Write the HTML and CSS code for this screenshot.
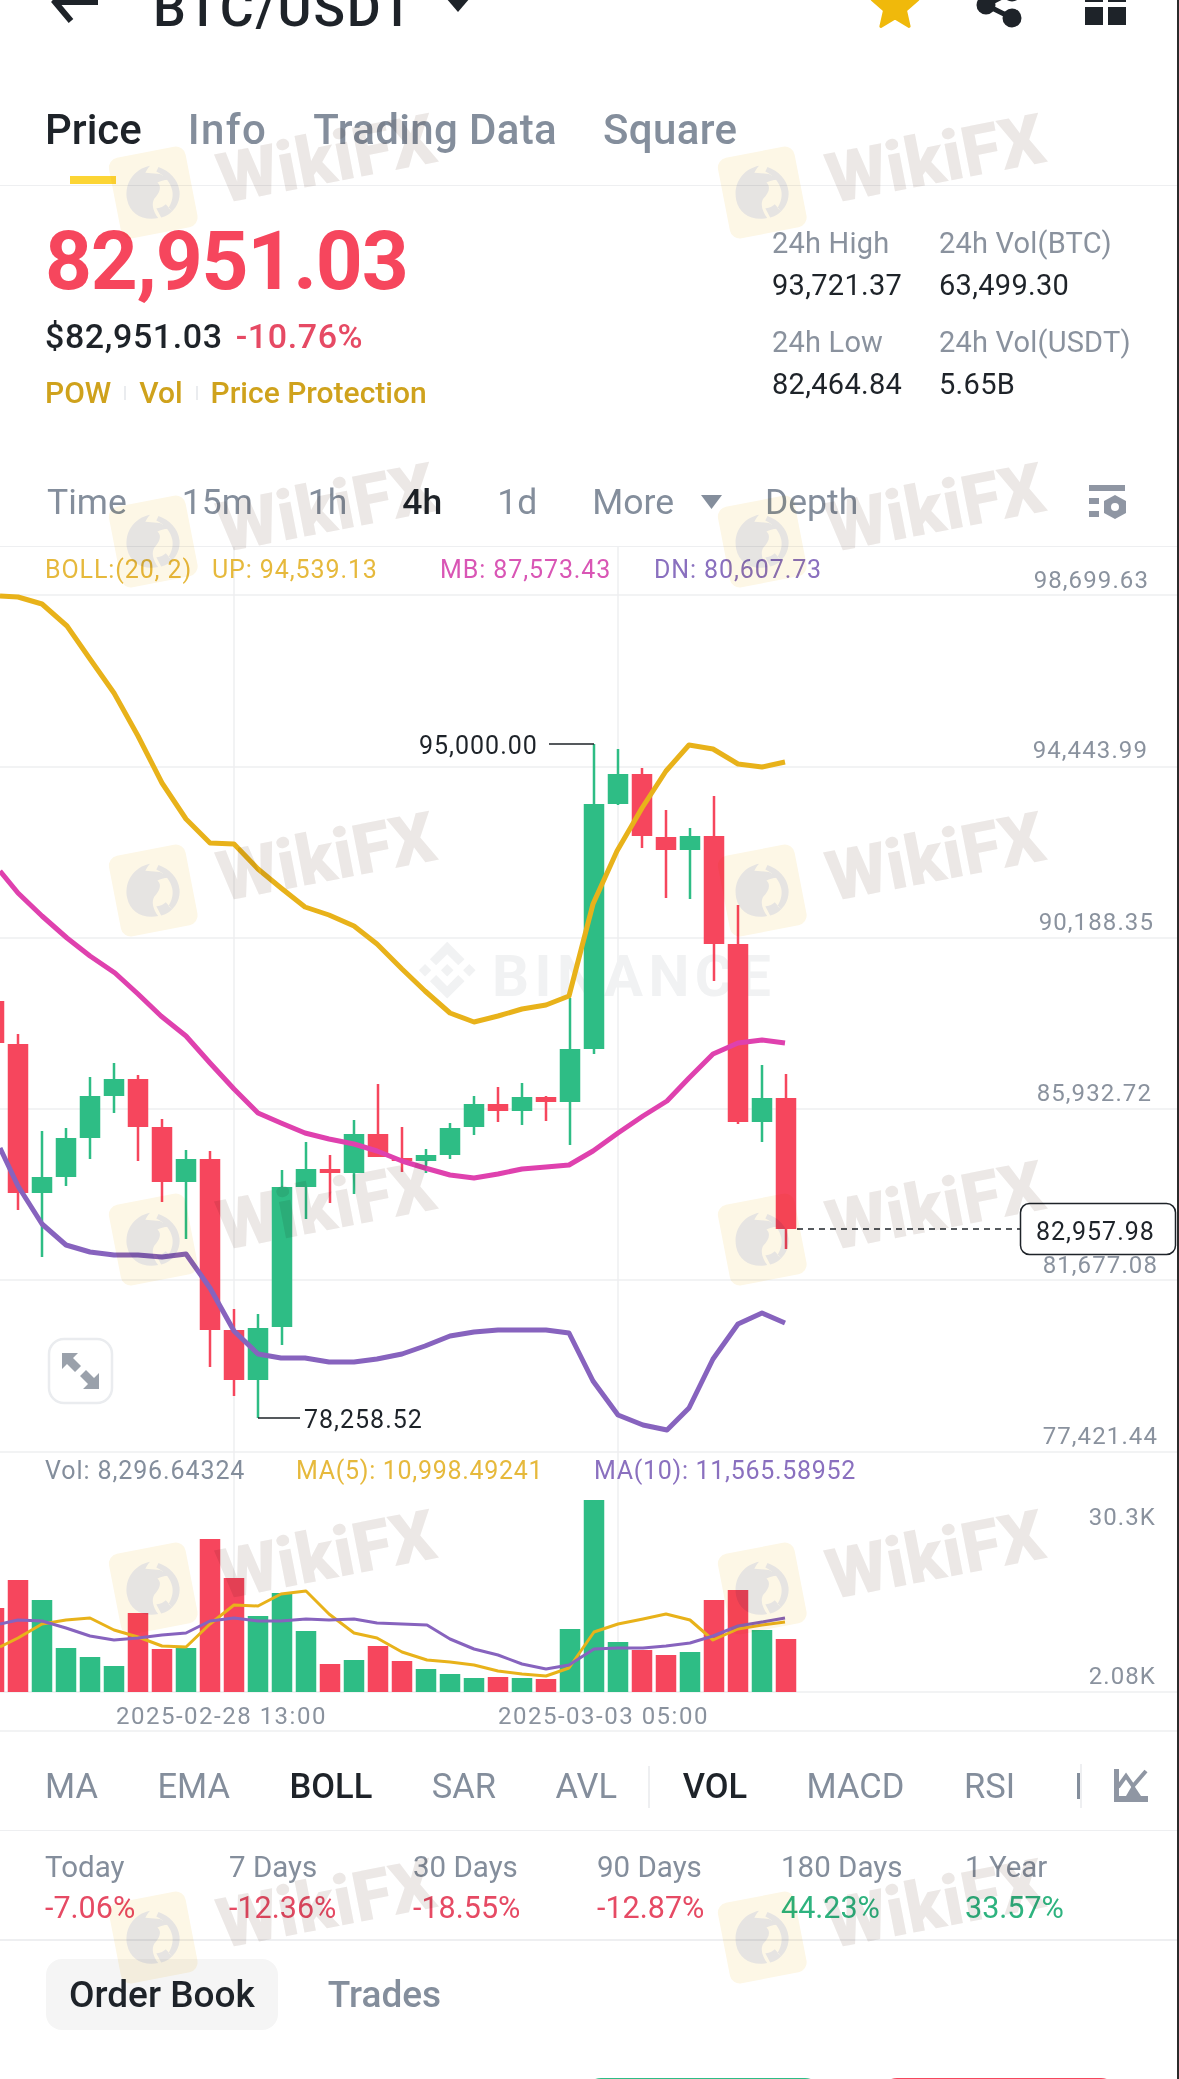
FILE: index.html
```html
<!DOCTYPE html>
<html lang="en">
<head>
  <meta charset="UTF-8" />
  <title>BTC/USDT</title>
  <link rel="stylesheet" href="styles.css">
</head>
<body>
  <div class="page">
    <div class="topbar">
      <svg class="ico-back" width="50" height="60" viewBox="0 0 50 60"><path d="M48 24H5M21 5L5 24L21 43"/></svg>
      <span class="pair">BTC/USDT</span>
      <svg class="ico-caret" width="24" height="60" viewBox="0 0 24 60"><path d="M0 20H24L12 34Z"/></svg>
      <svg class="ico-star" width="52" height="60" viewBox="0 -2 52 60"><path d="M26 3L32.5 18.1L48.800 19.600L36.500 30.400L40.100 46.400L26 38L11.900 46.400L15.500 30.400L3.200 19.600L19.500 18.100Z"/></svg>
      <svg class="ico-share" width="50" height="60" viewBox="0 0 50 60">
        <path d="M40 14L14 27L40 40"/>
        <circle cx="40" cy="14" r="9.5"/><circle cx="14" cy="27" r="9.5"/><circle cx="40" cy="40" r="9.5"/>
      </svg>
      <svg class="ico-grid" width="41" height="60" viewBox="0 0 41 60">
        <rect x="0" y="6" width="18" height="18"/><rect x="23" y="6" width="18" height="18"/>
        <rect x="0" y="29" width="18" height="18"/><rect x="23" y="29" width="18" height="18"/>
      </svg>
    </div>

    <div class="tabs">
      <span class="tab active">Price</span>
      <span class="tab tab-info">Info</span>
      <span class="tab">Trading Data</span>
      <span class="tab">Square</span>
    </div>

    <div class="summary">
      <div class="summary-left">
        <div class="last-price">82,951.03</div>
        <div class="fiat-row"><span>$82,951.03</span><span class="neg">-10.76%</span></div>
        <div class="tags"><span>POW</span><i></i><span>Vol</span><i></i><span>Price Protection</span></div>
      </div>
      <div class="stats24">
        <div><span class="stat-label">24h High</span><span class="stat-value">93,721.37</span></div>
        <div><span class="stat-label">24h Vol(BTC)</span><span class="stat-value">63,499.30</span></div>
        <div><span class="stat-label">24h Low</span><span class="stat-value">82,464.84</span></div>
        <div><span class="stat-label">24h Vol(USDT)</span><span class="stat-value">5.65B</span></div>
      </div>
    </div>

    <div class="timeframes">
      <span>Time</span>
      <span>15m</span>
      <span>1h</span>
      <span class="on">4h</span>
      <span>1d</span>
      <span class="more">More<svg width="21" height="14" viewBox="0 0 21 14"><path d="M0 0H21L10.500 14Z"/></svg></span>
      <span>Depth</span>
      <svg class="ico-settings" width="40" height="36" viewBox="0 0 40 36">
        <rect x="1" y="0" width="36" height="6"/><rect x="1" y="13" width="10" height="6"/><rect x="1" y="26" width="10" height="6"/>
        <path fill-rule="evenodd" d="M27 10L38 16V28L27 34L16 28V16ZM27 18A4 4 0 1 0 27 26A4 4 0 1 0 27 18Z"/>
      </svg>
    </div>

    <svg class="chart" width="1179" height="1185" viewBox="0 546 1179 1185">
      <!-- grid -->
      <path class="grid" d="M0 594H1179M0 766H1179M0 937H1179M0 1108H1179M0 1279H1179M0 1451H1179M0 1691H1179M0 1730H1179M234 546V1691M618 546V1691"/>

      <!-- exchange mark -->
      <g class="mark" transform="translate(404 926) scale(2.7)">
        <path d="M16 5.500L9.600 11.900L11.900 14.200L16 10.100L20.100 14.200L22.400 11.900ZM16 26.500L22.400 20.100L20.100 17.800L16 21.900L11.900 17.800L9.600 20.100ZM5.500 16L7.800 13.700L10.100 16L7.800 18.300ZM21.900 16L24.200 13.700L26.500 16L24.200 18.300ZM16 13.700L18.300 16L16 18.300L13.700 16Z"/>
      </g>
      <text class="mark-text" x="492" y="995">BINANCE</text>

      <!-- candles -->
      <path class="wick red" d="M18 1033V1209M138 1074V1160M162 1118V1201M210 1150V1366M234 1308V1395M330 1154V1202M378 1083V1156M402 1126V1171M498 1086V1121M546 1095V1120M642 767V847M666 809V897M714 795V980M738 904V1123M786 1073V1248"/>
      <path class="wick green" d="M42 1130V1256M66 1127V1185M90 1076V1158M114 1062V1112M186 1149V1238M258 1313V1417M282 1169V1344M306 1141V1218M354 1119V1193M426 1148V1172M450 1122V1158M474 1095V1134M522 1082V1124M570 997V1144M594 743V1053M618 748V804M690 827V898M762 1064V1141"/>
      <path class="body red" d="M-6 1000V1042M18 1043V1192M138 1078V1126M162 1126V1181M210 1158V1329M234 1329V1379M330 1168V1172M378 1133V1156M402 1157V1160M498 1103V1110M546 1096V1101M642 773V835M666 836V849M714 835V943M738 943V1121M786 1097V1228"/>
      <path class="body green" d="M42 1176V1192M66 1137V1176M90 1095V1137M114 1078V1095M186 1158V1181M258 1327V1379M282 1186V1326M306 1168V1186M354 1133V1172M426 1154V1160M450 1127V1154M474 1103V1126M522 1096V1110M570 1048V1101M594 803V1048M618 773V803M690 835V849M762 1097V1121"/>

      <!-- boll -->
      <polyline class="boll up" points="0,595 18,596 42,603 67,625 90,658 114,692 138,735 162,782 186,818 210,842 234,843 258,868 281,887 305,906 329,914 354,925 377,943 402,968 425,990 450,1012 474,1021 498,1015 522,1008 546,1004 569,995 593,903 617,850 642,807 666,770 689,744 713,748 738,763 762,766 785,761"/>
      <polyline class="boll mb" points="0,870 18,892 42,915 67,937 90,955 115,972 138,993 161,1015 186,1035 210,1062 234,1088 258,1112 281,1122 305,1132 329,1138 354,1143 377,1150 402,1160 425,1167 450,1174 474,1177 498,1173 522,1168 546,1166 569,1164 593,1150 618,1132 643,1115 667,1100 689,1077 713,1053 738,1042 762,1039 785,1042"/>
      <polyline class="boll dn" points="0,1147 18,1185 42,1223 66,1244 90,1251 114,1254 138,1254 162,1256 186,1253 210,1287 234,1330 258,1353 281,1357 305,1357 329,1361 354,1361 377,1358 402,1353 425,1345 450,1335 474,1331 498,1329 522,1329 546,1329 569,1332 593,1380 618,1414 643,1424 667,1429 689,1407 713,1358 738,1323 762,1312 785,1322"/>

      <!-- high / low / last -->
      <path class="leader" d="M549 743H594M258 1417H300"/>
      <text class="txt-dark" x="419" y="753">95,000.00</text>
      <text class="txt-dark" x="304" y="1427">78,258.52</text>
      <path class="last-line" d="M797 1228H1020"/>
      <rect class="last-box" x="1020.500" y="1202.500" width="155" height="51" rx="9"/>
      <text class="txt-dark" x="1036" y="1239">82,957.98</text>

      <!-- legend -->
      <text class="legend c-up" x="45" y="577">BOLL:(20, 2)</text>
      <text class="legend c-up" x="212" y="577">UP: 94,539.13</text>
      <text class="legend c-mb" x="440" y="577">MB: 87,573.43</text>
      <text class="legend c-dn" x="654" y="577">DN: 80,607.73</text>

      <!-- axis -->
      <text class="axis" x="1149" y="587">98,699.63</text>
      <text class="axis" x="1148" y="757">94,443.99</text>
      <text class="axis" x="1154" y="929">90,188.35</text>
      <text class="axis" x="1152" y="1100">85,932.72</text>
      <text class="axis" x="1158" y="1272">81,677.08</text>
      <text class="axis" x="1158" y="1443">77,421.44</text>

      <!-- fullscreen -->
      <rect class="expand-box" x="49" y="1338" width="63" height="64" rx="15"/>
      <path class="expand-ico" d="M62 1352H78L73 1357L81 1365L75 1371L67 1363L62 1368ZM99 1388H83L88 1383L80 1375L86 1369L94 1377L99 1372Z"/>

      <!-- volume -->
      <text class="legend c-vol" x="45" y="1478">Vol: 8,296.64324</text>
      <text class="legend legend-ma c-up" x="296" y="1478">MA(5): 10,998.49241</text>
      <text class="legend legend-ma c-dn" x="594" y="1478">MA(10): 11,565.58952</text>
      <path class="body red" d="M-6 1691V1607M18 1691V1579M138 1691V1612M162 1691V1648M210 1691V1538M234 1691V1577M330 1691V1663M378 1691V1645M402 1691V1660M498 1691V1676M546 1691V1678M642 1691V1649M666 1691V1654M714 1691V1599M738 1691V1589M786 1691V1638"/>
      <path class="body green" d="M42 1691V1599M66 1691V1647M90 1691V1656M114 1691V1665M186 1691V1647M258 1691V1615M282 1691V1592M306 1691V1630M354 1691V1659M426 1691V1668M450 1691V1673M474 1691V1677M522 1691V1677M570 1691V1628M594 1691V1499M618 1691V1641M690 1691V1651M762 1691V1629"/>
      <polyline class="ma ma5" points="0,1646 18,1637 42,1623 66,1619 90,1617 114,1629 138,1636 162,1645 186,1646 210,1623 234,1604 258,1605 281,1593 306,1590 329,1613 354,1632 377,1637 402,1651 427,1659 450,1661 474,1664 498,1670 522,1673 546,1675 569,1667 594,1631 618,1623 643,1618 666,1613 690,1619 713,1639 738,1628 762,1624 785,1621"/>
      <polyline class="ma ma10" points="0,1623 18,1619 42,1620 66,1627 90,1635 114,1639 138,1637 162,1634 186,1632 210,1620 234,1617 258,1620 281,1620 306,1618 329,1619 354,1618 377,1622 402,1623 427,1624 450,1638 474,1648 498,1654 522,1663 546,1668 569,1664 594,1648 618,1647 643,1647 666,1645 690,1642 713,1635 738,1625 762,1621 785,1617"/>
      <text class="axis" x="1156" y="1524">30.3K</text>
      <text class="axis" x="1156" y="1683">2.08K</text>
      <text class="date" x="116" y="1723">2025-02-28 13:00</text>
      <text class="date" x="498" y="1723">2025-03-03 05:00</text>
    </svg>

    <div class="indicators">
      <div class="ind-scroll">
        <span>MA</span>
        <span>EMA</span>
        <span class="on">BOLL</span>
        <span>SAR</span>
        <span class="ind-end">AVL</span>
        <span class="on">VOL</span>
        <span>MACD</span>
        <span>RSI</span>
        <i class="ind-cut"></i>
      </div>
      <svg class="ico-index" width="34" height="33" viewBox="0 0 34 33">
        <path d="M0 0H5V27H34V33H0Z"/>
        <path class="zig" d="M4 18L12 7L19 17L32 2"/>
        <path d="M19 15L27 27H12Z"/>
      </svg>
    </div>

    <div class="returns">
      <div><span class="r-label">Today</span><span class="r-value neg">-7.06%</span></div>
      <div><span class="r-label">7 Days</span><span class="r-value neg">-12.36%</span></div>
      <div><span class="r-label">30 Days</span><span class="r-value neg">-18.55%</span></div>
      <div><span class="r-label">90 Days</span><span class="r-value neg">-12.87%</span></div>
      <div><span class="r-label">180 Days</span><span class="r-value pos">44.23%</span></div>
      <div><span class="r-label">1 Year</span><span class="r-value pos">33.57%</span></div>
    </div>

    <div class="book-tabs">
      <span class="book-tab active">Order Book</span>
      <span class="book-tab">Trades</span>
    </div>

    <div class="actions">
      <span class="btn-buy"></span>
      <span class="btn-sell"></span>
    </div>

    <!-- watermark sits on top of everything -->
    <svg width="0" height="0" class="defs">
      <symbol id="wm-logo" viewBox="0 0 80 84">
        <rect x="1" y="1" width="78" height="82" rx="10" fill="#fdf7e6"/>
        <path fill="#e6e4e2" d="M13 44C13 27 26 15 42 15C38 18 37 20 36 21L50 25L60 33C54 31 50 32 46 33C50 38 46 44 40 48C36 52 36 60 40 68C24 68 13 58 13 44Z"/>
        <path fill="#e6e4e2" d="M50 18C60 24 67 34 66 46C65 54 61 60 55 64L52 60C56 56 59 50 59 44C59 36 55 28 47 22ZM43 68C48 68 52 66 55 64L50 56C47 58 44 59 40 58Z"/>
      </symbol>
    </svg>
    <div class="wm-layer">
      <div class="wm"><svg class="wm-logo"><use href="#wm-logo"/></svg><span>WikiFX</span></div>
      <div class="wm"><svg class="wm-logo"><use href="#wm-logo"/></svg><span>WikiFX</span></div>
      <div class="wm"><svg class="wm-logo"><use href="#wm-logo"/></svg><span>WikiFX</span></div>
      <div class="wm"><svg class="wm-logo"><use href="#wm-logo"/></svg><span>WikiFX</span></div>
      <div class="wm"><svg class="wm-logo"><use href="#wm-logo"/></svg><span>WikiFX</span></div>
      <div class="wm"><svg class="wm-logo"><use href="#wm-logo"/></svg><span>WikiFX</span></div>
      <div class="wm"><svg class="wm-logo"><use href="#wm-logo"/></svg><span>WikiFX</span></div>
      <div class="wm"><svg class="wm-logo"><use href="#wm-logo"/></svg><span>WikiFX</span></div>
      <div class="wm"><svg class="wm-logo"><use href="#wm-logo"/></svg><span>WikiFX</span></div>
      <div class="wm"><svg class="wm-logo"><use href="#wm-logo"/></svg><span>WikiFX</span></div>
      <div class="wm"><svg class="wm-logo"><use href="#wm-logo"/></svg><span>WikiFX</span></div>
      <div class="wm"><svg class="wm-logo"><use href="#wm-logo"/></svg><span>WikiFX</span></div>
    </div>
  </div>
</body>
</html>
```

FILE: styles.css
```css
:root {
  --dark: #1e2329;
  --gray: #848e9c;
  --line: #eeeff1;
  --red: #f6465d;
  --green: #2ebd85;
  --gold: #e8b71e;
}

* {
  box-sizing: border-box;
}

body {
  margin: 0;
  background: #fff;
  font-family: Roboto, "Liberation Sans", sans-serif;
  color: var(--dark);
}

.page {
  position: relative;
  width: 1179px;
  height: 2079px;
  overflow: hidden;
  border-right: 2px solid #2b2b2b;
}

/* top bar, cut by the top of the screen */
.topbar {
  display: flex;
  align-items: center;
  height: 60px;
  margin-top: -22px;
  padding-left: 50px;
}

.ico-back path {
  fill: none;
  stroke: var(--dark);
  stroke-width: 6;
}

.pair {
  margin-left: 53px;
  font-size: 52px;
  font-weight: 500;
  letter-spacing: 1.8px;
}

.ico-caret {
  margin-left: 31px;
  fill: var(--dark);
}

.ico-star {
  margin-left: 399px;
  fill: #f0b90b;
  stroke: #f0b90b;
  stroke-width: 3;
  stroke-linejoin: round;
}

.ico-share {
  margin-left: 51px;
  fill: var(--dark);
}

.ico-share path {
  fill: none;
  stroke: var(--dark);
  stroke-width: 5;
}

.ico-grid {
  margin-left: 63px;
  fill: var(--dark);
}

/* tabs */
.tabs {
  display: flex;
  gap: 46px;
  margin-top: 52px;
  padding: 0 45px 15px;
  border-bottom: 1px solid var(--line);
}

.tab {
  position: relative;
  font-size: 42px;
  line-height: 80px;
  font-weight: 500;
  letter-spacing: 0.35px;
  color: #848e9c;
}

.tab-info {
  letter-spacing: 1.4px;
}

.tab.active {
  letter-spacing: 0;
  color: var(--dark);
}

.tab.active::after {
  content: "";
  position: absolute;
  left: 25px;
  bottom: -14px;
  width: 46px;
  height: 8px;
  background: #fcd535;
}

/* price summary */
.summary {
  display: flex;
  justify-content: space-between;
  height: 225px;
  padding-left: 45px;
}

.last-price {
  margin-top: 33px;
  font-size: 82px;
  line-height: 84px;
  font-weight: 700;
  letter-spacing: -1.2px;
  color: var(--red);
}

.fiat-row {
  display: flex;
  gap: 13px;
  margin-top: 13px;
  font-size: 34px;
  line-height: 40px;
  font-weight: 500;
  letter-spacing: 0.6px;
}

.neg {
  color: #e64a64;
}

.pos {
  color: #2eb37f;
}

.tags {
  display: flex;
  align-items: center;
  gap: 13px;
  margin-top: 19px;
  font-size: 30px;
  line-height: 36px;
  font-weight: 500;
  color: #cfa21c;
}

.tags i {
  width: 2px;
  height: 14px;
  background: #eaecef;
}

.stats24 {
  display: grid;
  grid-template-columns: 167px 238px;
  row-gap: 21px;
  align-content: start;
  width: 405px;
  margin-top: 39px;
}

.stat-label,
.stat-value,
.r-label,
.r-value {
  display: block;
  font-size: 29px;
  line-height: 36px;
}

.stat-label {
  letter-spacing: 0.2px;
  color: #8a929e;
}

.stat-value {
  margin-top: 6px;
  letter-spacing: 0.3px;
}

/* timeframes */
.timeframes {
  display: flex;
  align-items: center;
  gap: 55px;
  height: 87px;
  margin-top: 49px;
  padding: 0 49px 3px 47px;
  border-bottom: 1px solid var(--line);
  font-size: 35.5px;
  color: var(--gray);
}

.timeframes .on {
  color: var(--dark);
  font-weight: 500;
}

.more {
  display: flex;
  align-items: center;
  gap: 27px;
  margin-right: -12px;
}

.more svg {
  fill: var(--gray);
}

.ico-settings {
  margin-left: auto;
  margin-top: 2px;
  fill: #8f96a3;
}

/* chart */
.chart {
  display: block;
}

.chart text {
  font-family: Roboto, "Liberation Sans", sans-serif;
}

.grid {
  fill: none;
  stroke: var(--line);
  stroke-width: 1.5;
}

.mark {
  fill: #f1f2f3;
}

.mark-text {
  font-size: 58px;
  font-weight: 700;
  letter-spacing: 5.500px;
  fill: #f1f2f3;
}

.wick {
  fill: none;
  stroke-width: 2.5;
}

.body {
  fill: none;
  stroke-width: 20.5;
}

.red {
  stroke: var(--red);
}

.green {
  stroke: var(--green);
}

.boll {
  fill: none;
  stroke-width: 5;
  stroke-linejoin: round;
}

.boll.up {
  stroke: #e8b21a;
}

.boll.mb {
  stroke: #df41ae;
}

.boll.dn {
  stroke: #8763be;
}

.ma {
  fill: none;
  stroke-width: 3;
  stroke-linejoin: round;
}

.ma5 {
  stroke: #e8b21a;
}

.ma10 {
  stroke: #8763be;
}

.leader {
  fill: none;
  stroke: var(--dark);
  stroke-width: 1.5;
}

.last-line {
  fill: none;
  stroke: var(--dark);
  stroke-width: 1.5;
  stroke-dasharray: 6 5;
}

.last-box {
  fill: #fff;
  stroke: var(--dark);
  stroke-width: 1.5;
}

.txt-dark {
  font-size: 25px;
  letter-spacing: 1px;
  fill: var(--dark);
}

.legend {
  font-size: 25px;
  letter-spacing: 0.9px;
}

.legend-ma {
  letter-spacing: 0.7px;
}

.c-up {
  fill: #e6b93c;
}

.c-mb {
  fill: #d956b5;
}

.c-dn {
  fill: #8a70bf;
}

.c-vol {
  fill: var(--gray);
}

.axis {
  font-size: 24px;
  letter-spacing: 1.1px;
  text-anchor: end;
  fill: #8a929e;
}

.date {
  font-size: 24px;
  letter-spacing: 1.5px;
  fill: #8a929e;
}

.expand-box {
  fill: #fff;
  stroke: #eaecef;
  stroke-width: 2.5;
}

.expand-ico {
  fill: #9aa1ab;
}

/* indicator switches */
.indicators {
  display: flex;
  align-items: center;
  height: 99px;
  padding-top: 9px;
  border-bottom: 1.5px solid var(--line);
}

.ind-scroll {
  position: relative;
  display: flex;
  align-items: center;
  gap: 59.500px;
  width: 1082px;
  height: 44px;
  padding-left: 45px;
  overflow: hidden;
  border-right: 2px solid var(--line);
  font-size: 34.5px;
  color: var(--gray);
  white-space: nowrap;
}

.ind-scroll .on {
  color: var(--dark);
  font-weight: 500;
}

.ind-end {
  position: relative;
  margin-right: 6px;
}

.ind-end::after {
  content: "";
  position: absolute;
  top: 0;
  right: -33px;
  width: 2px;
  height: 44px;
  background: var(--line);
}

/* the next item, scrolled almost out of view */
.ind-cut {
  position: absolute;
  right: 0;
  width: 3px;
  height: 26px;
  background: var(--gray);
}

.ico-index {
  margin-left: 32px;
  fill: #8f96a3;
}

.ico-index .zig {
  fill: none;
  stroke: #8f96a3;
  stroke-width: 4;
}

/* period returns */
.returns {
  display: grid;
  grid-template-columns: repeat(6, 184px);
  height: 110px;
  padding: 18px 0 0 45px;
  border-bottom: 2px solid var(--line);
}

.r-label {
  font-size: 29.5px;
  color: var(--gray);
}

.r-value {
  margin-top: 5px;
  font-size: 30.5px;
}

/* order book */
.book-tabs {
  display: flex;
  align-items: center;
  gap: 50px;
  margin-top: 18px;
  padding-left: 46px;
  font-size: 37px;
  color: var(--gray);
}

.book-tab {
  line-height: 71px;
  font-weight: 500;
}

.book-tab.active {
  padding: 0 23px;
  border-radius: 16px;
  background: #f5f5f5;
  color: var(--dark);
}

.actions {
  display: flex;
  justify-content: flex-end;
  gap: 60px;
  margin-top: 48px;
  padding-right: 60px;
}

.btn-buy,
.btn-sell {
  width: 236px;
  height: 40px;
  border-radius: 16px;
}

.btn-buy {
  background: var(--green);
}

.btn-sell {
  background: var(--red);
}

/* watermark */
.defs {
  position: absolute;
}

.wm-layer {
  position: absolute;
  top: -6px;
  left: -30px;
  display: grid;
  grid-template-columns: repeat(2, 609px);
  grid-auto-rows: 349px;
  place-items: center;
  mix-blend-mode: multiply;
  pointer-events: none;
}

.wm {
  display: flex;
  align-items: center;
  gap: 26px;
  transform: rotate(-11deg);
}

.wm-logo {
  width: 80px;
  height: 84px;
}

.wm span {
  font-size: 70px;
  line-height: 84px;
  font-weight: 900;
  color: #ece8e6;
}
```
